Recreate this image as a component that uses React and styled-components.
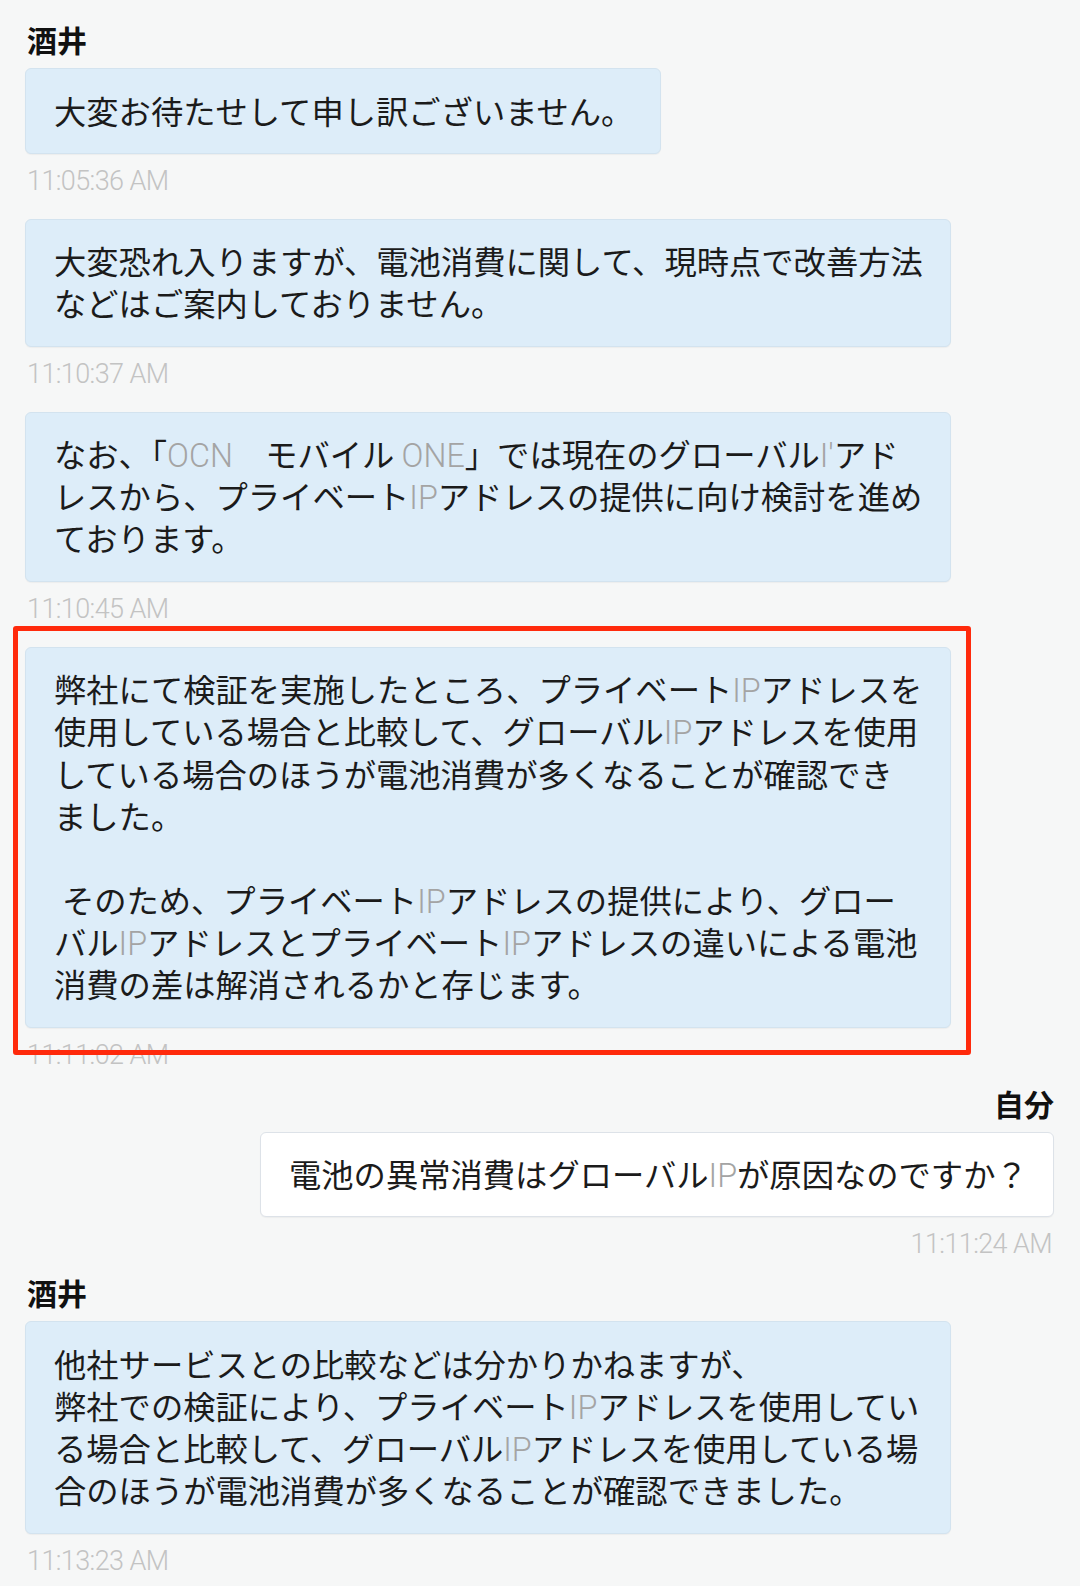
import React from 'react'
import styled, { createGlobalStyle } from 'styled-components'

const GlobalStyle = createGlobalStyle`
  html, body {
    margin: 0;
    padding: 0;
    background: #f6f7f7;
  }
  body {
    font-family: "Noto Sans CJK JP", "Noto Sans", sans-serif;
    color: #1b1b1b;
  }
`

const Page = styled.div`
  width: 1080px;
  height: 1586px;
  overflow: hidden;
  box-sizing: border-box;
  padding: 19px 26px 0 25px;
  display: flex;
  flex-direction: column;
  gap: 13px;
`

const Group = styled.section`
  display: flex;
  flex-direction: column;
  align-items: ${(p) => (p.$mine ? 'flex-end' : 'flex-start')};
`

const Name = styled.div`
  font-family: "Noto Sans CJK JP", sans-serif;
  font-weight: 700;
  font-size: 30px;
  line-height: 40px;
  margin: 0 0 9px 2px;
  color: #111;
`

const Message = styled.div`
  display: flex;
  flex-direction: column;
  align-items: ${(p) => (p.$mine ? 'flex-end' : 'flex-start')};
  margin-bottom: 23px;

  &:last-child {
    margin-bottom: 0;
  }
`

const BubbleWrap = styled.div`
  position: relative;
`

const Bubble = styled.div`
  box-sizing: border-box;
  width: ${(p) => (p.$width ? `${p.$width}px` : 'auto')};
  padding: 19.5px 28px 22px;
  border-radius: 6px;
  background: ${(p) => (p.$mine ? '#ffffff' : '#ddedf9')};
  border: 1px solid ${(p) => (p.$mine ? '#dde2e8' : '#d3e3ef')};
  box-shadow: 0 1px 1px rgba(0, 0, 0, 0.04);
  font-size: 32.3px;
  line-height: 42.2px;
`

const Line = styled.div`
  white-space: nowrap;
  height: 42.2px;
  overflow: visible;
`

const Latin = styled.span`
  font-family: Roboto, "Noto Sans", sans-serif;
  font-weight: 300;
  line-height: 1;
  color: #a4a4a4;
`

const Time = styled.div`
  font-family: Roboto, "Noto Sans", sans-serif;
  font-weight: 300;
  font-size: 27px;
  letter-spacing: -0.6px;
  line-height: 30px;
  margin-top: 12px;
  padding: 0 2px;
  color: #c3c3c3;
`

const Highlight = styled.div`
  position: absolute;
  top: -21px;
  left: -12px;
  right: -20px;
  bottom: -27px;
  border: 5px solid #ff2a0c;
  border-radius: 3px;
  z-index: 2;
  pointer-events: none;
`

const L = ({ children }) => <Latin>{children}</Latin>

const ChatMessage = ({ lines, time, width, mine, marked }) => (
  <Message $mine={mine}>
    <BubbleWrap>
      <Bubble $mine={mine} $width={width}>
        {lines.map((line, i) => (
          <Line key={i}>{line}</Line>
        ))}
      </Bubble>
      {marked && <Highlight />}
    </BubbleWrap>
    <Time>{time}</Time>
  </Message>
)

export default function App() {
  return (
    <>
      <GlobalStyle />
      <Page>
        <Group>
          <Name>酒井</Name>
          <ChatMessage
            width={636}
            time='11:05:36 AM'
            lines={['大変お待たせして申し訳ございません。']}
          />
          <ChatMessage
            width={926}
            time='11:10:37 AM'
            lines={[
              '大変恐れ入りますが、電池消費に関して、現時点で改善方法',
              'などはご案内しておりません。',
            ]}
          />
          <ChatMessage
            width={926}
            time='11:10:45 AM'
            lines={[
              <>
                なお、「<L>OCN</L>　モバイル <L>ONE</L>」では現在のグローバル<L>I'</L>アド
              </>,
              <>
                レスから、プライベート<L>IP</L>アドレスの提供に向け検討を進め
              </>,
              'ております。',
            ]}
          />
          <ChatMessage
            width={926}
            marked
            time='11:11:02 AM'
            lines={[
              <>
                弊社にて検証を実施したところ、プライベート<L>IP</L>アドレスを
              </>,
              <>
                使用している場合と比較して、グローバル<L>IP</L>アドレスを使用
              </>,
              'している場合のほうが電池消費が多くなることが確認でき',
              'ました。',
              '',
              <>
                <L>&nbsp;</L>そのため、プライベート<L>IP</L>アドレスの提供により、グロー
              </>,
              <>
                バル<L>IP</L>アドレスとプライベート<L>IP</L>アドレスの違いによる電池
              </>,
              '消費の差は解消されるかと存じます。',
            ]}
          />
        </Group>

        <Group $mine>
          <Name>自分</Name>
          <ChatMessage
            mine
            width={794}
            time='11:11:24 AM'
            lines={[
              <>
                電池の異常消費はグローバル<L>IP</L>が原因なのですか？
              </>,
            ]}
          />
        </Group>

        <Group>
          <Name>酒井</Name>
          <ChatMessage
            width={926}
            time='11:13:23 AM'
            lines={[
              '他社サービスとの比較などは分かりかねますが、',
              <>
                弊社での検証により、プライベート<L>IP</L>アドレスを使用してい
              </>,
              <>
                る場合と比較して、グローバル<L>IP</L>アドレスを使用している場
              </>,
              '合のほうが電池消費が多くなることが確認できました。',
            ]}
          />
        </Group>
      </Page>
    </>
  )
}
